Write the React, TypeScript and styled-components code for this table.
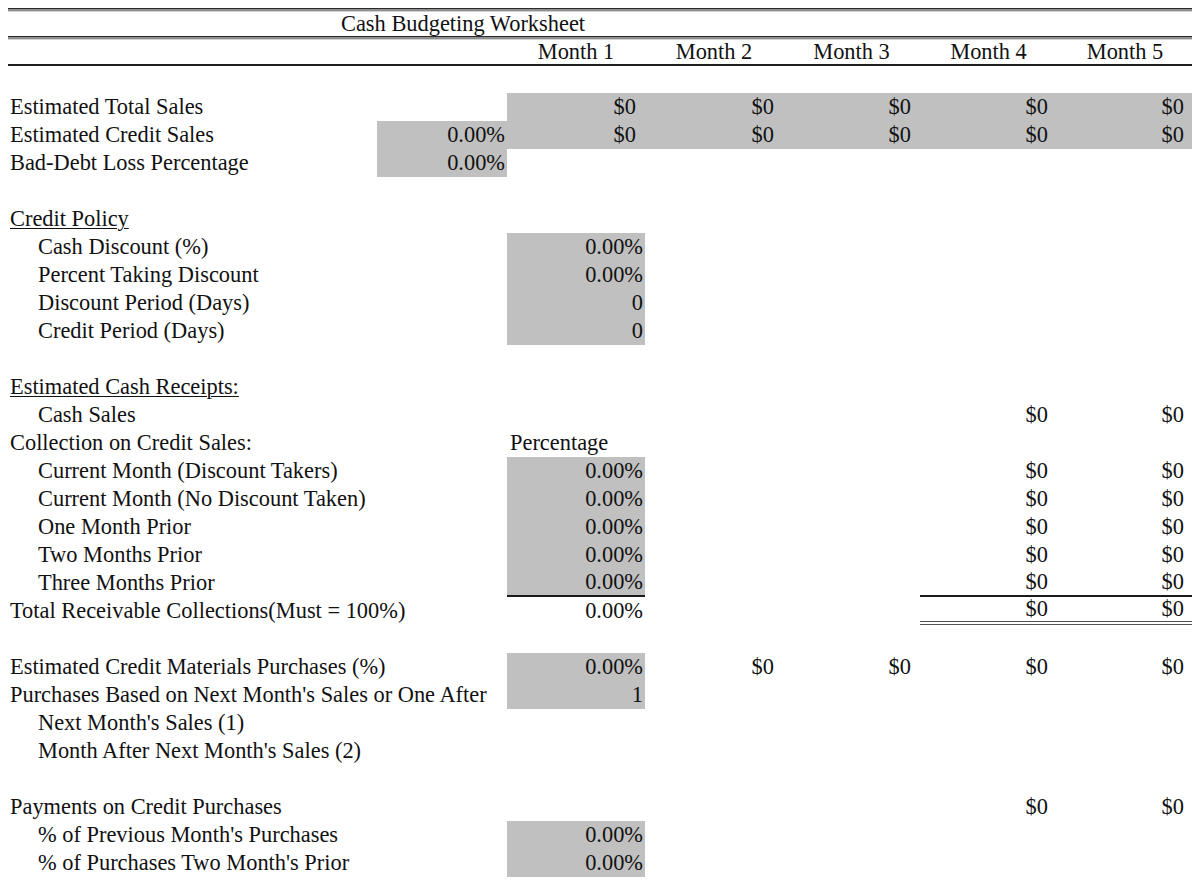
import React from "react";
import styled, { createGlobalStyle, css } from "styled-components";

const Global = createGlobalStyle`
  html, body { background: #ffffff; }
  body {
    margin: 8px;
    font-family: "Liberation Serif", "Times New Roman", serif;
    color: #111111;
  }
`;

const COLS = "369px 130px 138px 138px 137px 137px 136px";
const FONT = "22.4px";

const Sheet = styled.div`
  width: 1185px;
  display: flex;
  flex-direction: column;
`;

const Rule = styled.div<{ $kind: "double" | "single" }>`
  width: 100%;
  ${({ $kind }) =>
    $kind === "double"
      ? css`
          height: 4px;
          background: linear-gradient(
            to bottom,
            #2a2a2a 0 1.5px,
            #8f8f8f 1.5px 3.5px,
            #d0d0d0 3.5px 4px
          );
        `
      : css`
          height: 2px;
          background: #1e1e1e;
        `}
`;

const TitleRow = styled.div`
  height: 24px;
  line-height: 24px;
  font-size: ${FONT};
  padding-left: 333px;
  white-space: nowrap;
`;

const HeaderRow = styled.div`
  display: grid;
  grid-template-columns: ${COLS};
  height: 24px;
`;

const MonthLabel = styled.div`
  font-size: ${FONT};
  line-height: 24px;
  text-align: center;
  white-space: nowrap;
`;

const Spacer = styled.div<{ $h: number }>`
  height: ${({ $h }) => $h}px;
`;

const Row = styled.div`
  display: grid;
  grid-template-columns: ${COLS};
  height: 28px;
`;

const Label = styled.div<{ $indent?: boolean; $underline?: boolean }>`
  font-size: ${FONT};
  line-height: 27px;
  white-space: nowrap;
  padding-left: ${({ $indent }) => ($indent ? 30 : 2)}px;
  position: relative;
  z-index: 1;
  span {
    text-decoration: ${({ $underline }) => ($underline ? "underline" : "none")};
    text-decoration-thickness: 1px;
    text-underline-offset: 2px;
  }
`;

type Kind = "cur" | "pct" | "text";

const Cell = styled.div<{
  $kind: Kind;
  $shade?: boolean;
  $rule?: "single" | "double";
}>`
  box-sizing: border-box;
  height: 28px;
  font-size: ${FONT};
  line-height: 27px;
  white-space: nowrap;
  background: ${({ $shade }) => ($shade ? "#c0c0c0" : "transparent")};
  text-align: ${({ $kind }) => ($kind === "text" ? "left" : "right")};
  padding-right: ${({ $kind }) => ($kind === "cur" ? 9 : $kind === "pct" ? 2 : 0)}px;
  padding-left: ${({ $kind }) => ($kind === "text" ? 3 : 0)}px;
  ${({ $rule }) =>
    $rule === "single"
      ? css`
          border-bottom: 2px solid #1a1a1a;
          line-height: 25px;
        `
      : $rule === "double"
      ? css`
          border-bottom: 4px double #555555;
          line-height: 23px;
        `
      : ""}
`;

type CellSpec = {
  v?: string;
  kind?: Kind;
  shade?: boolean;
  rule?: "single" | "double";
};

type RowSpec = {
  label?: string;
  indent?: boolean;
  underline?: boolean;
  cells?: Partial<Record<number, CellSpec>>;
};

const gp = (v = "0.00%"): CellSpec => ({ v, kind: "pct", shade: true });
const gc = (): CellSpec => ({ v: "$0", kind: "cur", shade: true });
const c = (rule?: "single" | "double"): CellSpec => ({ v: "$0", kind: "cur", rule });

// column indexes: 0=B, 1=C (Month 1), 2=D, 3=E, 4=F, 5=G
const rows: RowSpec[] = [
  { label: "Estimated Total Sales", cells: { 1: gc(), 2: gc(), 3: gc(), 4: gc(), 5: gc() } },
  { label: "Estimated Credit Sales", cells: { 0: gp(), 1: gc(), 2: gc(), 3: gc(), 4: gc(), 5: gc() } },
  { label: "Bad-Debt Loss Percentage", cells: { 0: gp() } },
  {},
  { label: "Credit Policy", underline: true },
  { label: "Cash Discount (%)", indent: true, cells: { 1: gp() } },
  { label: "Percent Taking Discount", indent: true, cells: { 1: gp() } },
  { label: "Discount Period (Days)", indent: true, cells: { 1: gp("0") } },
  { label: "Credit Period (Days)", indent: true, cells: { 1: gp("0") } },
  {},
  { label: "Estimated Cash Receipts:", underline: true },
  { label: "Cash Sales", indent: true, cells: { 4: c(), 5: c() } },
  { label: "Collection on Credit Sales:", cells: { 1: { v: "Percentage", kind: "text" } } },
  { label: "Current Month (Discount Takers)", indent: true, cells: { 1: gp(), 4: c(), 5: c() } },
  { label: "Current Month (No Discount Taken)", indent: true, cells: { 1: gp(), 4: c(), 5: c() } },
  { label: "One Month Prior", indent: true, cells: { 1: gp(), 4: c(), 5: c() } },
  { label: "Two Months Prior", indent: true, cells: { 1: gp(), 4: c(), 5: c() } },
  {
    label: "Three Months Prior",
    indent: true,
    cells: { 1: { ...gp(), rule: "single" }, 4: c("single"), 5: c("single") },
  },
  {
    label: "Total Receivable Collections(Must = 100%)",
    cells: { 1: { v: "0.00%", kind: "pct" }, 4: c("double"), 5: c("double") },
  },
  {},
  {
    label: "Estimated Credit Materials Purchases (%)",
    cells: { 1: gp(), 2: c(), 3: c(), 4: c(), 5: c() },
  },
  { label: "Purchases Based on Next Month's Sales or One After", cells: { 1: gp("1") } },
  { label: "Next Month's Sales (1)", indent: true },
  { label: "Month After Next Month's Sales (2)", indent: true },
  {},
  { label: "Payments on Credit Purchases", cells: { 4: c(), 5: c() } },
  { label: "% of Previous Month's Purchases", indent: true, cells: { 1: gp() } },
  { label: "% of Purchases Two Month's Prior", indent: true, cells: { 1: gp() } },
];

const months = ["Month 1", "Month 2", "Month 3", "Month 4", "Month 5"];

export default function App() {
  return (
    <>
      <Global />
      <Sheet>
        <Rule $kind="double" />
        <TitleRow>Cash Budgeting Worksheet</TitleRow>
        <Rule $kind="double" />
        <HeaderRow>
          <div />
          <div />
          {months.map((m) => (
            <MonthLabel key={m}>{m}</MonthLabel>
          ))}
        </HeaderRow>
        <Rule $kind="single" />
        <Spacer $h={27} />
        {rows.map((r, i) => (
          <Row key={i}>
            <Label $indent={r.indent} $underline={r.underline}>
              <span>{r.label ?? ""}</span>
            </Label>
            {[0, 1, 2, 3, 4, 5].map((ci) => {
              const spec = r.cells?.[ci];
              return (
                <Cell
                  key={ci}
                  $kind={spec?.kind ?? "text"}
                  $shade={spec?.shade}
                  $rule={spec?.rule}
                >
                  {spec?.v ?? ""}
                </Cell>
              );
            })}
          </Row>
        ))}
      </Sheet>
    </>
  );
}
